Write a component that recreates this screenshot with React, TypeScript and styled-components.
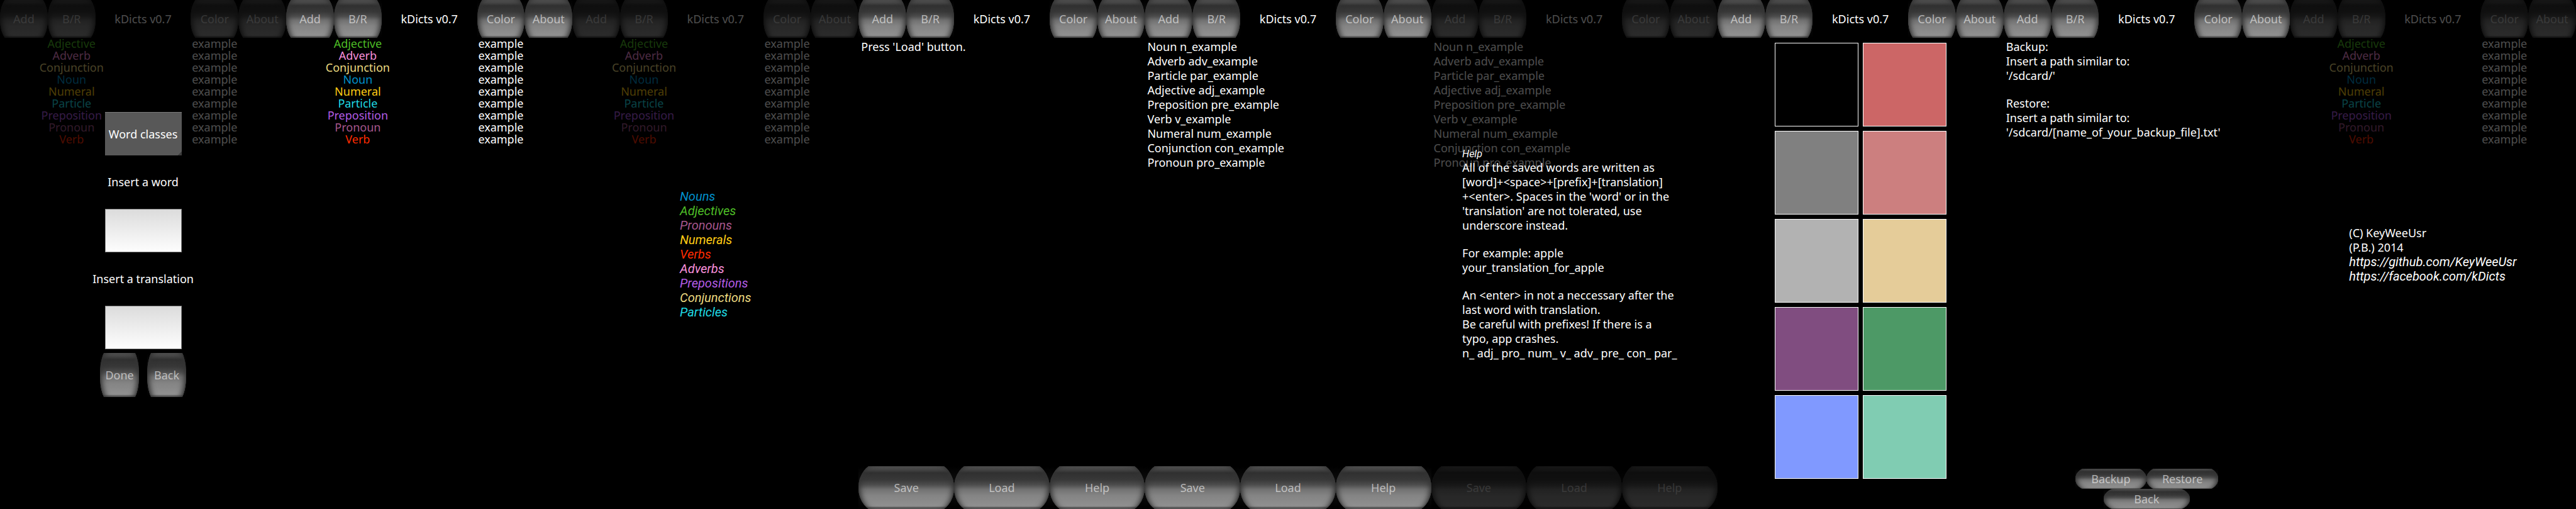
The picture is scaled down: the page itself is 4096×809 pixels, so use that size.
import React from "react";
import styled, { createGlobalStyle, css } from "styled-components";

const GlobalStyle = createGlobalStyle`
  *, *::before { box-sizing: border-box; }
  html, body, #root { height: 100%; }
  body {
    margin: 0;
    background: #000;
    color: #fff;
    font: 18px/23px "Noto Sans", sans-serif;
  }
  button, input, select { font: inherit; margin: 0; padding: 0; }
`;

const colors = {
  adjective: "#4dbd26",
  adverb: "#f990dc",
  conjunction: "#eddb80",
  noun: "#0090cc",
  numeral: "#ffcc14",
  particle: "#1fdce6",
  preposition: "#b35ce6",
  pronoun: "#a6568c",
  verb: "#ff2b00",
};

const Gallery = styled.main`
  display: grid;
  grid-template-columns: repeat(9, minmax(0, 1fr));
  min-height: 100%;
`;

const Screen = styled.section`
  position: relative;
  display: flex;
  flex-direction: column;
  min-width: 0;
  overflow: hidden;
`;

const Toolbar = styled.header`
  display: grid;
  grid-template-columns: 1fr 1fr 2fr 1fr 1fr;
  height: 60px;
`;

const Title = styled.h1`
  margin: 0;
  align-self: center;
  text-align: center;
  font-size: 18px;
  font-weight: 400;
`;

const GlossyButton = styled.button`
  position: relative;
  isolation: isolate;
  overflow: hidden;
  min-width: 0;
  border: 0;
  background: linear-gradient(#000, #121212 50%, #000);
  color: rgba(255, 255, 255, 0.57);

  &::before {
    content: "";
    position: absolute;
    z-index: -1;
    inset: -8% 0;
    border-radius: 21% / 50%;
    background: linear-gradient(
      #4c4c4c 8%,
      #464646 13%,
      #303030 20%,
      #383838 34%,
      #4c4c4c 44%,
      #727272 54%,
      #848484 66%,
      #8f8f8f 86%,
      #8c8c8c 88%,
      #505050 91%,
      #5a5a5a 93%
    );
    box-shadow: inset 7px 0 8px -4px #343434, inset -7px 0 8px -4px #343434,
      inset 0 0 2px #3c3c3c;
  }
`;

const WordTable = styled.table`
  width: 100%;
  table-layout: fixed;
  border-collapse: collapse;
  line-height: 19px;
  text-align: center;
`;

const WordCell = styled.td<{ $color?: string }>`
  padding: 0;
  color: ${(p) => p.$color ?? "#fff"};
`;

const TextArea = styled.div`
  flex: 1;
  display: flex;
  flex-direction: column;
  gap: 21px;
  padding: 3px 4px;
`;

const Paragraph = styled.p`
  margin: 0;
  white-space: pre;
`;

const Footer = styled.footer`
  display: grid;
  grid-template-columns: repeat(3, 1fr);
  height: 68px;
`;

const Overlay = styled.div`
  position: absolute;
  inset: 0;
  display: flex;
  flex-direction: column;
  align-items: center;
  justify-content: center;
  background: rgba(0, 0, 0, 0.7);
`;

const AddForm = styled.form`
  display: flex;
  flex-direction: column;
  align-items: center;
  gap: 6px;
`;

const Fields = styled.div`
  display: grid;
  grid-auto-rows: 69px;
  gap: 8px;
  place-items: center;
`;

const fieldBox = css`
  width: 122px;
  height: 100%;
  border-radius: 0;
`;

const ClassSelect = styled.select`
  ${fieldBox}
  appearance: none;
  border: 0;
  border-top: 1px solid #7a7a7a;
  color: #fff;
  text-align: center;
  text-align-last: center;
  background: linear-gradient(135deg, transparent 50%, #3c3c3c 50%) right bottom / 7px 7px
      no-repeat,
    #585858;
`;

const TextInput = styled.input`
  ${fieldBox}
  border: 1px solid #8a8a8a;
  background: linear-gradient(#dcdcdc, #f0f0f0 60%, #fdfdfd);
  color: #000;
`;

const FormActions = styled.div`
  display: grid;
  grid-template-columns: 62px 62px;
  grid-auto-rows: 70px;
  gap: 13px;
`;

const LinkList = styled.ul`
  margin: 0;
  padding: 0;
  list-style: none;
`;

const MarkupLink = styled.a<{ $color?: string }>`
  display: block;
  color: ${(p) => p.$color ?? "#fff"};
  font: italic 20px/23px Roboto, sans-serif;
  text-decoration: none;
`;

const HelpBox = styled.article`
  width: 80%;
  padding: 0 4px 2px;
`;

const HelpTitle = styled.h2`
  margin: 0;
  font: italic 16px/20px Roboto, sans-serif;
`;

const HelpText = styled.div`
  display: flex;
  flex-direction: column;
  gap: 21px;
`;

const Palette = styled.div`
  display: grid;
  grid-template-columns: repeat(2, 133px);
  grid-auto-rows: 133px;
  gap: 7px;
  justify-content: center;
  padding-top: 8px;
`;

const Swatch = styled.button<{ $color: string }>`
  border: 1px solid #fff;
  background: ${(p) => p.$color};
`;

const BackupActions = styled.footer`
  display: grid;
  grid-template-columns: 25% 25%;
  grid-auto-rows: 32px;
  justify-content: center;
`;

const BackButton = styled(GlossyButton)`
  grid-column: 1 / -1;
  justify-self: center;
  width: 60%;
`;

const words: [string, string][] = [
  ["Adjective", colors.adjective],
  ["Adverb", colors.adverb],
  ["Conjunction", colors.conjunction],
  ["Noun", colors.noun],
  ["Numeral", colors.numeral],
  ["Particle", colors.particle],
  ["Preposition", colors.preposition],
  ["Pronoun", colors.pronoun],
  ["Verb", colors.verb],
];

const classes: [string, string][] = [
  ["Nouns", colors.noun],
  ["Adjectives", colors.adjective],
  ["Pronouns", colors.pronoun],
  ["Numerals", colors.numeral],
  ["Verbs", colors.verb],
  ["Adverbs", colors.adverb],
  ["Prepositions", colors.preposition],
  ["Conjunctions", colors.conjunction],
  ["Particles", colors.particle],
];

const swatches: [string, string][] = [
  ["Black", "#000"],
  ["Red", "#cc6666"],
  ["Gray", "#808080"],
  ["Rose", "#cc7f7f"],
  ["Silver", "#b2b2b2"],
  ["Sand", "#e5cc99"],
  ["Purple", "#804d80"],
  ["Green", "#4d9966"],
  ["Blue", "#8099ff"],
  ["Mint", "#80ccb2"],
];

const savedWords = `Noun n_example
Adverb adv_example
Particle par_example
Adjective adj_example
Preposition pre_example
Verb v_example
Numeral num_example
Conjunction con_example
Pronoun pro_example`;

const backupText = [
  `Backup:
Insert a path similar to:
'/sdcard/'`,
  `Restore:
Insert a path similar to:
'/sdcard/[name_of_your_backup_file].txt'`,
];

const helpText = [
  `All of the saved words are written as
[word]+<space>+[prefix]+[translation]
+<enter>. Spaces in the 'word' or in the
'translation' are not tolerated, use
underscore instead.`,
  `For example: apple
your_translation_for_apple`,
  `An <enter> in not a neccessary after the
last word with translation.
Be careful with prefixes! If there is a
typo, app crashes.
n_ adj_ pro_ num_ v_ adv_ pre_ con_ par_`,
];

const AppScreen = ({ children }: { children: React.ReactNode }) => (
  <Screen>
    <Toolbar>
      <GlossyButton>Add</GlossyButton>
      <GlossyButton>B/R</GlossyButton>
      <Title>kDicts v0.7</Title>
      <GlossyButton>Color</GlossyButton>
      <GlossyButton>About</GlossyButton>
    </Toolbar>
    {children}
  </Screen>
);

const Words = () => (
  <WordTable>
    <tbody>
      {words.map(([name, color]) => (
        <tr key={name}>
          <WordCell $color={color}>{name}</WordCell>
          <WordCell>example</WordCell>
        </tr>
      ))}
    </tbody>
  </WordTable>
);

const Editor = ({ text }: { text: string }) => (
  <>
    <TextArea>
      <Paragraph>{text}</Paragraph>
    </TextArea>
    <Footer>
      <GlossyButton>Save</GlossyButton>
      <GlossyButton>Load</GlossyButton>
      <GlossyButton>Help</GlossyButton>
    </Footer>
  </>
);

export default function App() {
  return (
    <>
      <GlobalStyle />
      <Gallery>
        <AppScreen>
          <Words />
          <Overlay>
            <AddForm>
              <Fields>
                <ClassSelect aria-label="Word classes">
                  <option>Word classes</option>
                </ClassSelect>
                <label htmlFor="word">Insert a word</label>
                <TextInput id="word" />
                <label htmlFor="translation">Insert a translation</label>
                <TextInput id="translation" />
              </Fields>
              <FormActions>
                <GlossyButton type="button">Done</GlossyButton>
                <GlossyButton type="button">Back</GlossyButton>
              </FormActions>
            </AddForm>
          </Overlay>
        </AppScreen>

        <AppScreen>
          <Words />
        </AppScreen>

        <AppScreen>
          <Words />
          <Overlay>
            <LinkList>
              {classes.map(([name, color]) => (
                <li key={name}>
                  <MarkupLink href={`#${name.toLowerCase()}`} $color={color}>
                    {name}
                  </MarkupLink>
                </li>
              ))}
            </LinkList>
          </Overlay>
        </AppScreen>

        <AppScreen>
          <Editor text="Press 'Load' button." />
        </AppScreen>

        <AppScreen>
          <Editor text={savedWords} />
        </AppScreen>

        <AppScreen>
          <Editor text={savedWords} />
          <Overlay>
            <HelpBox>
              <HelpTitle>Help</HelpTitle>
              <HelpText>
                {helpText.map((text) => (
                  <Paragraph key={text}>{text}</Paragraph>
                ))}
              </HelpText>
            </HelpBox>
          </Overlay>
        </AppScreen>

        <AppScreen>
          <Palette>
            {swatches.map(([name, color]) => (
              <Swatch key={name} $color={color} aria-label={name} />
            ))}
          </Palette>
        </AppScreen>

        <AppScreen>
          <TextArea>
            {backupText.map((text) => (
              <Paragraph key={text}>{text}</Paragraph>
            ))}
          </TextArea>
          <BackupActions>
            <GlossyButton>Backup</GlossyButton>
            <GlossyButton>Restore</GlossyButton>
            <BackButton>Back</BackButton>
          </BackupActions>
        </AppScreen>

        <AppScreen>
          <Words />
          <Overlay>
            <div>
              <Paragraph>{"(C) KeyWeeUsr\n(P.B.) 2014"}</Paragraph>
              <MarkupLink href="https://github.com/KeyWeeUsr">
                https://github.com/KeyWeeUsr
              </MarkupLink>
              <MarkupLink href="https://facebook.com/kDicts">
                https://facebook.com/kDicts
              </MarkupLink>
            </div>
          </Overlay>
        </AppScreen>
      </Gallery>
    </>
  );
}
